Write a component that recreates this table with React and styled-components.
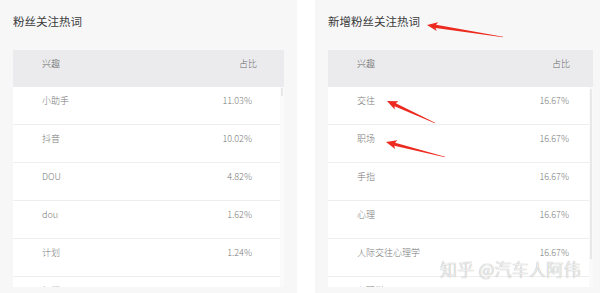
import styled, { createGlobalStyle } from "styled-components";

const GlobalStyle = createGlobalStyle`
    html, body {
        margin: 0;
        padding: 0;
        background: #ffffff;
    }
    body {
        font-family: "Noto Sans CJK SC", "Noto Sans", sans-serif;
    }
`;

const Page = styled.div`
    position: relative;
    display: flex;
    gap: 18px;
    width: 600px;
    height: 293px;
    overflow: hidden;
    background: #ffffff;
`;

const Panel = styled.div`
    flex: none;
    box-sizing: border-box;
    width: ${p => p.$width}px;
    height: 293px;
    padding: 14px ${p => p.$pr}px 0 13px;
    background: #f7f7f8;
`;

const Title = styled.div`
    height: 14px;
    line-height: 14px;
    margin-bottom: 22px;
    font-size: 11.5px;
    color: #3a3a3a;
    white-space: nowrap;
`;

const Table = styled.div`
    height: 237px;
    overflow: hidden;
    background: #ffffff;
`;

const HeadRow = styled.div`
    display: flex;
    justify-content: space-between;
    box-sizing: border-box;
    height: 37px;
    padding: 8px ${p => p.$pr}px 0 29px;
    background: #ebebed;
    font-size: 9px;
    line-height: 11px;
    font-weight: 300;
    color: #666;
`;

const BodyWrap = styled.div`
    display: flex;
`;

const Rows = styled.div`
    flex: 1;
`;

const Row = styled.div`
    display: flex;
    justify-content: space-between;
    box-sizing: border-box;
    height: 38px;
    padding: 8px ${p => p.$pr}px 0 29px;
    border-bottom: 1px solid #eeeeee;
    font-size: 9px;
    line-height: 11px;
    font-weight: 300;
    color: #777;
`;

const Scroll = styled.div`
    flex: none;
    width: 4px;
    background: #fafafa;
    position: relative;
`;

const Thumb = styled.div`
    position: absolute;
    left: 1px;
    top: ${p => p.$top}px;
    width: 2px;
    height: ${p => p.$h}px;
    background: #e8e8e8;
`;

const Overlay = styled.svg`
    position: absolute;
    left: 0;
    top: 0;
    pointer-events: none;
`;

const Watermark = styled.div`
    position: absolute;
    left: 440px;
    top: 259px;
    font-size: 17px;
    line-height: 20px;
    font-weight: 300;
    letter-spacing: 0.3px;
    color: rgba(255, 255, 255, 0.9);
    text-shadow: 0 0 1px #a8a8a8, 0 0 1px #b4b4b4;
    white-space: nowrap;
`;

const leftData = [
    ["小助手", "11.03%"],
    ["抖音", "10.02%"],
    ["DOU", "4.82%"],
    ["dou", "1.62%"],
    ["计划", "1.24%"],
    ["标题", "1.11%"],
];

const rightData = [
    ["交往", "16.67%"],
    ["职场", "16.67%"],
    ["手指", "16.67%"],
    ["心理", "16.67%"],
    ["人际交往心理学", "16.67%"],
    ["心理学", "16.67%"],
];

// tapered red arrow from tail to tip
function arrowPoints([tx, ty], [ex, ey]) {
    const dx = tx - ex, dy = ty - ey;
    const len = Math.hypot(dx, dy);
    const ux = dx / len, uy = dy / len;
    const nx = -uy, ny = ux;
    const headLen = 9, headW = 4.5, shaft = 1.6;
    const bx = tx - ux * headLen, by = ty - uy * headLen;
    const pts = [
        [ex + nx * 0.3, ey + ny * 0.3],
        [bx + nx * shaft, by + ny * shaft],
        [bx + nx * headW - ux * 1.5, by + ny * headW - uy * 1.5],
        [tx, ty],
        [bx - nx * headW - ux * 1.5, by - ny * headW - uy * 1.5],
        [bx - nx * shaft, by - ny * shaft],
        [ex - nx * 0.3, ey - ny * 0.3],
    ];
    return pts.map(p => p.map(v => v.toFixed(1)).join(",")).join(" ");
}

const arrows = [
    [[427, 25], [503, 37]],
    [[387, 101], [435, 123]],
    [[386, 142], [445, 157]],
];

function WordTable({ data, headPr, rowPr, thumbTop, thumbH }) {
    return (
        <Table>
            <HeadRow $pr={headPr}>
                <span>兴趣</span>
                <span>占比</span>
            </HeadRow>
            <BodyWrap>
                <Rows>
                    {data.map(([name, pct]) => (
                        <Row key={name} $pr={rowPr}>
                            <span>{name}</span>
                            <span>{pct}</span>
                        </Row>
                    ))}
                </Rows>
                <Scroll>
                    <Thumb $top={thumbTop} $h={thumbH} />
                </Scroll>
            </BodyWrap>
        </Table>
    );
}

export default function App() {
    return (
        <>
            <GlobalStyle />
            <Page>
                <Panel $width={297} $pr={13}>
                    <Title>粉丝关注热词</Title>
                    <WordTable data={leftData} headPr={27} rowPr={28} thumbTop={1} thumbH={8} />
                </Panel>
                <Panel $width={285} $pr={7}>
                    <Title>新增粉丝关注热词</Title>
                    <WordTable data={rightData} headPr={23} rowPr={20} thumbTop={2} thumbH={170} />
                </Panel>
                <Watermark>知乎 @汽车人阿伟</Watermark>
                <Overlay width="600" height="293">
                    {arrows.map((a, i) => (
                        <polygon key={i} points={arrowPoints(a[0], a[1])} fill="#ec2a1f" />
                    ))}
                </Overlay>
            </Page>
        </>
    );
}
